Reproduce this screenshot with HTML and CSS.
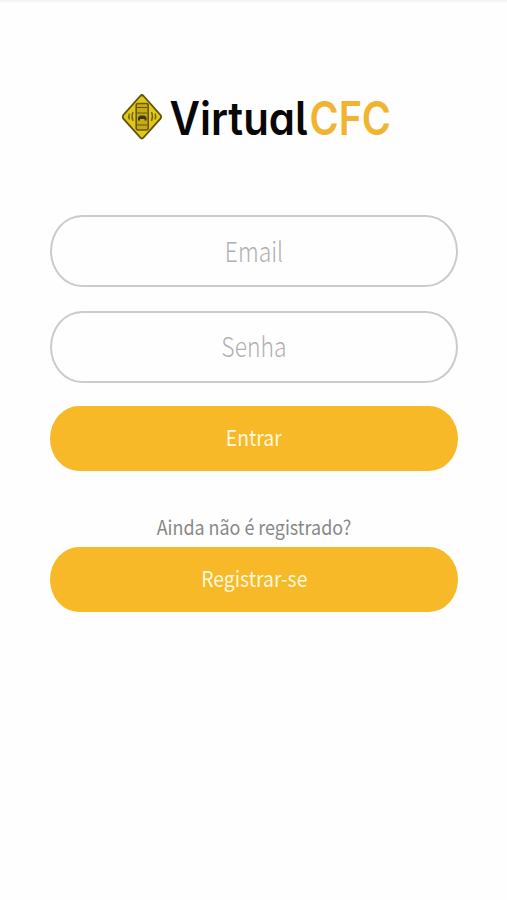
FILE: index.html
```html
<!DOCTYPE html>
<html lang="pt-BR">
<head>
  <meta charset="UTF-8" />
  <meta name="viewport" content="width=device-width, initial-scale=1.0"/>
  <title>VirtualCFC</title>
  <link rel="stylesheet" href="styles.css">
</head>
<body>
  <div class="container">
    <h1 class="logo">
      <svg width="270" height="50" viewBox="0 0 270 50">
        <rect x="7.2" y="9.7" width="28.6" height="28.6" rx="2.5" fill="#e3c717" stroke="#5d5410" stroke-width="1.7" transform="translate(-.6 -3.1) scale(1 1.12) rotate(45 21.5 24)"/>
        <rect x="15.2" y="10.5" width="12" height="26.5" rx="2" fill="#c4aa14" stroke="#665909" stroke-width="1.6"/>
        <path d="M16 14.5h10.5M16 20h10.5M16 32h10.5" stroke="#665909" stroke-width="1"/>
        <path d="M17 27.5v-3l2-2h4.5l2 2v3h-2v-1.5H19v1.5z" fill="#40380a"/>
        <path d="M12 19q-2 4.500 0 9M8.500 20.500q-1.500 3 0 6M30.500 19q2 4.500 0 9M34 20.500q1.500 3 0 6" fill="none" stroke="#786a0b" stroke-width="1.5"/>
        <text class="logo-text" x="48.5" y="42" textLength="138" lengthAdjust="spacingAndGlyphs">Virtual</text>
        <text class="logo-text accent" x="188.500" y="42" textLength="81.500" lengthAdjust="spacingAndGlyphs">CFC</text>
      </svg>
    </h1>

    <form id="loginForm">
      <div class="field">
        <input type="email" id="email" placeholder="Email">
      </div>
      <div class="field">
        <input type="password" id="senha" placeholder="Senha">
      </div>
      <button type="submit"><span>Entrar</span></button>
    </form>

    <p>Ainda não é registrado?</p>
    <button type="button"><span>Registrar-se</span></button>
  </div>
</body>
</html>
```

FILE: styles.css
```css
* {
  margin: 0;
  padding: 0;
  box-sizing: border-box;
}
body {
  font-family: 'Noto Sans CJK SC', 'Noto Sans', sans-serif;
  min-height: 100vh;
  background: #fefefe;
  border-top: 2px solid #f5f5f5;
}
.container {
  width: 408px;
  margin: 0 auto 0 50px;
  padding-top: 91px;
  text-align: center;
}
.logo {
  height: 50px;
  margin-bottom: 72px;
}
.logo svg {
  display: block;
  margin-left: 71px;
  overflow: visible;
}
.logo-text {
  font-family: Inter, Lato, sans-serif;
  font-size: 46px;
  font-weight: 600;
  font-feature-settings: 'cv11', 'cv05';
  fill: #080808;
}
.logo-text.accent {
  fill: #f0b431;
}
.field {
  height: 72px;
  margin-bottom: 23.5px;
  border: 2px solid #cbcbcb;
  border-radius: 32px / 36px;
  overflow: hidden;
}
input {
  width: 100%;
  height: 100%;
  padding-bottom: 2px;
  border: none;
  outline: none;
  background: transparent;
  font-family: inherit;
  font-size: 27px;
  font-weight: 300;
  text-align: center;
  color: #777;
  transform: scaleX(0.85);
}
input::placeholder {
  color: #b0b0b0;
}
button {
  display: block;
  width: 100%;
  height: 65px;
  padding-bottom: 5px;
  border: none;
  border-radius: 29px / 32.5px;
  background: #f7b928;
  color: #fff8dc;
  font-family: inherit;
  font-size: 22px;
  cursor: pointer;
}
button span {
  display: inline-block;
  transform: scaleX(0.88);
}
p {
  margin-top: 41px;
  height: 35px;
  line-height: 30px;
  font-size: 20px;
  color: #888;
  transform: scaleX(0.895);
}
```
